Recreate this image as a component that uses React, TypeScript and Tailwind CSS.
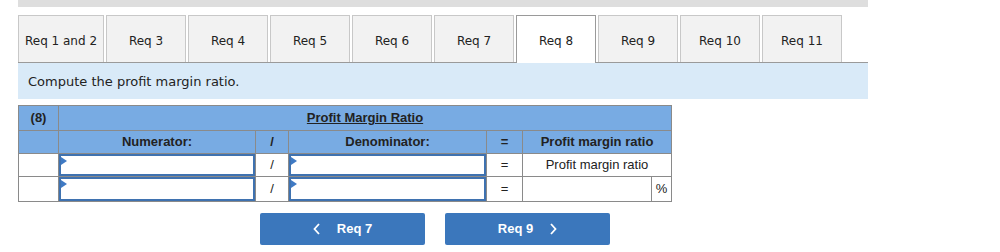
import React from 'react';

const tabs = ['Req 1 and 2', 'Req 3', 'Req 4', 'Req 5', 'Req 6', 'Req 7', 'Req 8', 'Req 9', 'Req 10', 'Req 11'];

const InputCell: React.FC<{ h: string }> = ({ h }) => (
  <td className="p-0 border border-[#8a8a8a]">
    <div className={`relative w-full border-2 border-[#3f72b0] bg-white ${h}`}>
      <span className="absolute left-0 top-[1px] w-0 h-0 border-l-[6px] border-l-[#3f7ac4] border-y-[4px] border-y-transparent" />
    </div>
  </td>
);

export default function App() {
  return (
    <div className="w-[1000px] h-[252px] bg-white pl-[18px]" style={{ fontFamily: '"DejaVu Sans", Verdana, sans-serif' }}>
      <div className="w-[850px] h-[7px] bg-[#dedede]" />

      {/* tabs */}
      <div className="w-[850px] mt-[8px] flex gap-[2px] border-b border-[#9a9a9a] h-[48px]">
        {tabs.map((t, i) => {
          const active = t === 'Req 8';
          return (
            <div
              key={t}
              className={`flex items-center justify-center pt-[3px] text-[12px] text-[#222] border border-b-0 ${
                i === 0 ? 'w-[86px]' : 'w-[80px]'
              } ${active ? 'bg-white border-[#9a9a9a] h-[48px] -mb-px' : 'bg-[#f2f2f2] border-[#c8c8c8] h-[47px]'}`}
            >
              {t}
            </div>
          );
        })}
      </div>

      <div className="w-[850px] h-[36px] bg-[#d9eaf8] flex items-center pl-[10px] pt-[1px] text-[13px] text-[#222]">
        Compute the profit margin ratio.
      </div>

      {/* table */}
      <table
        className="mt-[6px] table-fixed border-collapse border border-[#8a8a8a] text-[13px] text-[#222]"
        style={{ fontFamily: '"Liberation Sans", Arial, sans-serif', width: 653 }}
      >
        <colgroup>
          <col className="w-[40px]" />
          <col className="w-[197px]" />
          <col className="w-[33px]" />
          <col className="w-[198px]" />
          <col className="w-[36px]" />
          <col className="w-[129px]" />
          <col className="w-[20px]" />
        </colgroup>
        <tbody>
          <tr className="h-[25px] bg-[#78abe3] font-bold">
            <td className="border border-[#8a8a8a] text-center">(8)</td>
            <td colSpan={6} className="border border-[#8a8a8a] text-center underline">Profit Margin Ratio</td>
          </tr>
          <tr className="h-[23px] bg-[#78abe3] font-bold">
            <td className="border border-[#8a8a8a]" />
            <td className="border border-[#8a8a8a] text-center">Numerator:</td>
            <td className="border border-[#8a8a8a] text-center">/</td>
            <td className="border border-[#8a8a8a] text-center">Denominator:</td>
            <td className="border border-[#8a8a8a] text-center">=</td>
            <td colSpan={2} className="border border-[#8a8a8a] text-center">Profit margin ratio</td>
          </tr>
          <tr className="h-[23px]">
            <td className="border border-[#8a8a8a]" />
            <InputCell h="h-[22px]" />
            <td className="border border-[#8a8a8a] text-center">/</td>
            <InputCell h="h-[22px]" />
            <td className="border border-[#8a8a8a] text-center">=</td>
            <td colSpan={2} className="border border-[#8a8a8a] text-center">Profit margin ratio</td>
          </tr>
          <tr className="h-[25px]">
            <td className="border border-[#8a8a8a]" />
            <InputCell h="h-[24px]" />
            <td className="border border-[#8a8a8a] text-center">/</td>
            <InputCell h="h-[24px]" />
            <td className="border border-[#8a8a8a] text-center">=</td>
            <td className="border border-[#8a8a8a]" />
            <td className="border border-[#8a8a8a] text-center">%</td>
          </tr>
        </tbody>
      </table>

      {/* nav buttons */}
      <div
        className="flex gap-[20px] ml-[242px] mt-[11px] text-[13px] font-bold text-white"
        style={{ fontFamily: '"Liberation Sans", Arial, sans-serif' }}
      >
        <button className="w-[165px] h-[32px] rounded-[2px] bg-[#3b77bc] flex items-center justify-center gap-[16px]">
          <svg width="8" height="12" viewBox="0 0 8 12" fill="none" stroke="white" strokeWidth="1.8">
            <path d="M6 1 L1.5 6 L6 11" />
          </svg>
          <span>Req 7</span>
        </button>
        <button className="w-[165px] h-[32px] rounded-[2px] bg-[#3b77bc] flex items-center justify-center gap-[16px]">
          <span>Req 9</span>
          <svg width="8" height="12" viewBox="0 0 8 12" fill="none" stroke="white" strokeWidth="1.8">
            <path d="M2 1 L6.5 6 L2 11" />
          </svg>
        </button>
      </div>
    </div>
  );
}
